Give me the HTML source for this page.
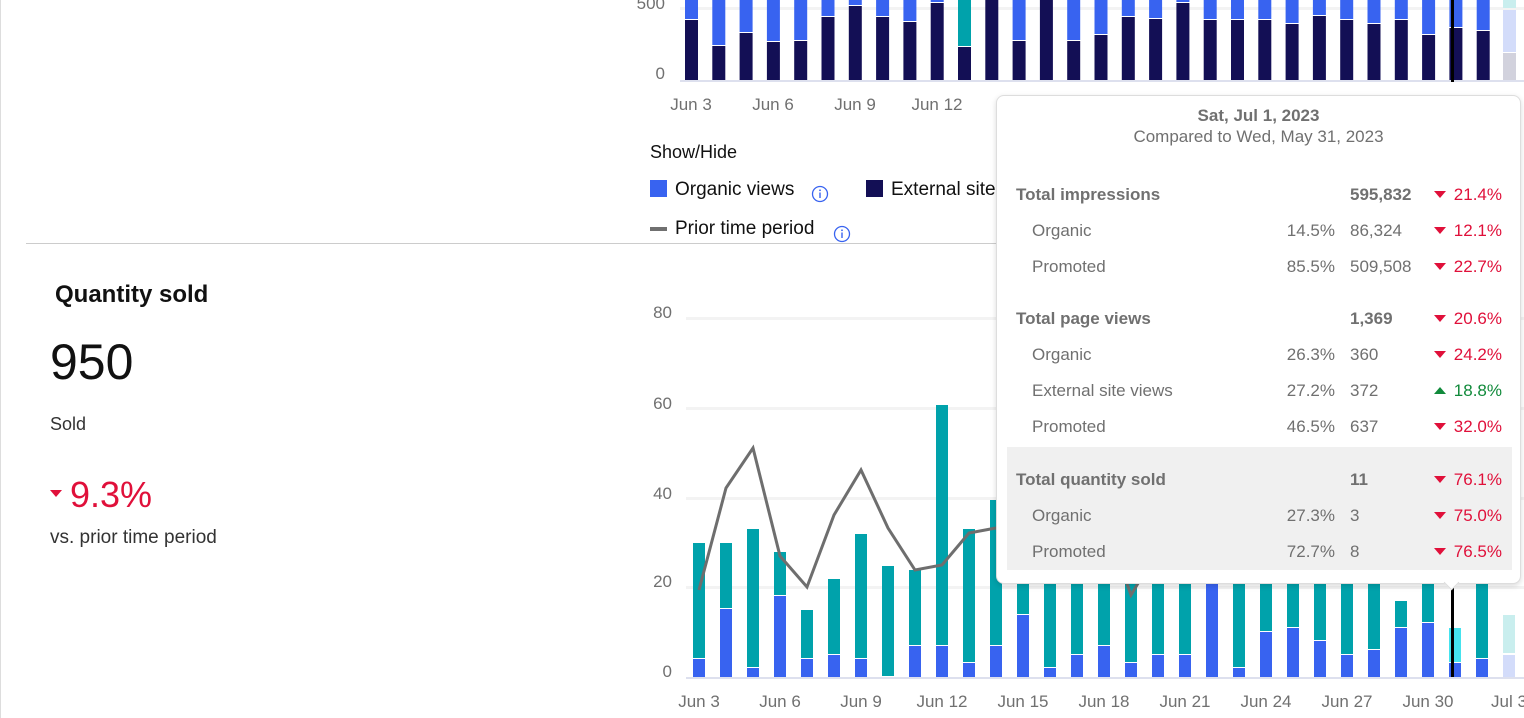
<!DOCTYPE html>
<html><head><meta charset="utf-8"><style>
body{margin:0;width:1524px;height:718px;overflow:hidden;background:#fff;font-family:"Liberation Sans",Arial,sans-serif;position:relative}
.a{position:absolute;white-space:nowrap}
.tt{position:absolute;left:996px;top:95px;width:523px;height:487px;background:#fff;border:1px solid #ddd;border-radius:8px;box-shadow:0 2px 6px rgba(0,0,0,.15);color:#707070;font-size:17px}
.tt .r{position:absolute;left:0;width:523px;height:24px}
.tt .r span{position:absolute}
.red{color:#e0103a}.grn{color:#118a3b}
.dn::before{content:"";display:inline-block;border-left:6px solid transparent;border-right:6px solid transparent;border-top:7px solid #e0103a;margin-right:8px;vertical-align:2px}
.up::before{content:"";display:inline-block;border-left:6px solid transparent;border-right:6px solid transparent;border-bottom:7px solid #118a3b;margin-right:8px;vertical-align:2px}
</style></head><body>
<div class="a" style="left:0;top:0;width:1px;height:718px;background:#ddd"></div>
<div class="a" style="left:26px;top:243px;width:1000px;height:1px;background:#ccc"></div>

<svg class="a" style="left:0;top:0" width="1524" height="718">
<g font-family="Liberation Sans,Arial" font-size="17" fill="#707070">
<text x="665" y="9" text-anchor="end">500</text><text x="665" y="79" text-anchor="end">0</text>
<text x="691" y="110" text-anchor="middle">Jun 3</text><text x="773" y="110" text-anchor="middle">Jun 6</text><text x="855" y="110" text-anchor="middle">Jun 9</text><text x="937" y="110" text-anchor="middle">Jun 12</text>
<text x="672" y="318" text-anchor="end">80</text><text x="672" y="409" text-anchor="end">60</text><text x="672" y="499" text-anchor="end">40</text><text x="672" y="587" text-anchor="end">20</text><text x="672" y="677" text-anchor="end">0</text>
<text x="699" y="707" text-anchor="middle">Jun 3</text><text x="780" y="707" text-anchor="middle">Jun 6</text><text x="861" y="707" text-anchor="middle">Jun 9</text><text x="942" y="707" text-anchor="middle">Jun 12</text><text x="1023" y="707" text-anchor="middle">Jun 15</text><text x="1104" y="707" text-anchor="middle">Jun 18</text><text x="1185" y="707" text-anchor="middle">Jun 21</text><text x="1266" y="707" text-anchor="middle">Jun 24</text><text x="1347" y="707" text-anchor="middle">Jun 27</text><text x="1428" y="707" text-anchor="middle">Jun 30</text><text x="1509" y="707" text-anchor="middle">Jul 3</text>
</g>
<g fill="#f3f3f3"><rect x="680" y="7" width="844" height="3"/><rect x="686" y="317" width="838" height="3"/><rect x="686" y="407" width="838" height="3"/><rect x="686" y="497" width="838" height="3"/><rect x="686" y="586" width="838" height="3"/></g>
<rect x="680" y="80" width="844" height="2" fill="#dde0ee"/>
<rect x="686" y="677" width="838" height="2" fill="#dde0ee"/>
<g id="top"></g>
<g id="bot"></g>
<polyline points="699,590 726,488 753,448 780,556 807,587 834,515 861,470 888,528 915,570 942,565 969,533 996,528 1010,526" fill="none" stroke="#6e6e6e" stroke-width="3"/>
<polyline points="1124,575 1131,595 1140,580" fill="none" stroke="#6e6e6e" stroke-width="3"/>
<rect x="1451" y="0" width="3" height="82" fill="#000"/>
<rect x="1451" y="585" width="3" height="92" fill="#000"/>
</svg>
<script>
var NS="http://www.w3.org/2000/svg";
function r(g,x,y,w,h,c){if(h<=0)return;var e=document.createElementNS(NS,"rect");e.setAttribute("x",x);e.setAttribute("y",y);e.setAttribute("width",w);e.setAttribute("height",h);e.setAttribute("fill",c);g.appendChild(e);}
var tg=document.getElementById("top");
var dk=[20,46,33,42,41,17,6,17,22,3,47,0,41,0,41,35,17,19,3,20,20,20,24,16,20,24,20,35,28,31];
for(var i=0;i<30;i++){var x=685+27.3*i;r(tg,x,0,13,dk[i]-1,i==10?"#00a2ab":"#3863f0");r(tg,x,dk[i],13,80-dk[i],"#130f55");}
r(tg,1503,0,13,8,"#c9eeee");r(tg,1503,10,13,42,"#d3dcfa");r(tg,1503,53,13,27,"#d2d2dd");
var bg=document.getElementById("bot");
var B=[[543,659],[543,609],[529,668],[552,596],[610,659],[579,655],[534,659],[566,677],[570,646],[405,646],[529,663],[500,646],[540,615],[540,668],[550,655],[555,646],[560,663],[550,655],[550,655],[560,580],[550,668],[550,632],[550,628],[550,641],[550,655],[555,650],[601,628],[550,623],[628,663],[560,659]];
for(var i=0;i<30;i++){var x=693+27*i,t=B[i][0],o=B[i][1];r(bg,x,t,12,o-t-1,i==28?"#45e3ee":"#00a2ab");r(bg,x,o,12,677-o,"#3863f0");}
r(bg,1503,615,12,38,"#c9eeee");r(bg,1503,655,12,22,"#d3dcfa");
</script>

<div class="a" style="left:650px;top:142px;font-size:18px;color:#111">Show/Hide</div>
<div class="a" style="left:650px;top:180px;width:17px;height:17px;background:#3863f0"></div>
<div class="a" style="left:675px;top:179px;font-size:19px;color:#111">Organic views</div>
<svg class="a" style="left:811px;top:185px" width="18" height="18"><circle cx="9" cy="9" r="7.5" fill="none" stroke="#3863f0" stroke-width="1.3"/><rect x="8.3" y="7.5" width="1.4" height="5.5" fill="#3863f0"/><circle cx="9" cy="5.3" r="0.9" fill="#3863f0"/></svg>
<div class="a" style="left:866px;top:180px;width:17px;height:17px;background:#130f55"></div>
<div class="a" style="left:891px;top:179px;font-size:19px;color:#111">External site</div>
<div class="a" style="left:650px;top:227px;width:17px;height:4px;background:#707070"></div>
<div class="a" style="left:675px;top:218px;font-size:19px;color:#111">Prior time period</div>
<svg class="a" style="left:833px;top:225px" width="18" height="18"><circle cx="9" cy="9" r="7.5" fill="none" stroke="#3863f0" stroke-width="1.3"/><rect x="8.3" y="7.5" width="1.4" height="5.5" fill="#3863f0"/><circle cx="9" cy="5.3" r="0.9" fill="#3863f0"/></svg>

<div class="a" style="left:55px;top:281px;font-size:24px;font-weight:bold;color:#111">Quantity sold</div>
<div class="a" style="left:50px;top:333px;font-size:50px;color:#111">950</div>
<div class="a" style="left:50px;top:414px;font-size:18px;color:#333">Sold</div>
<div class="a" style="left:50px;top:474px;font-size:36px;color:#e0103a"><span style="display:inline-block;border-left:6px solid transparent;border-right:6px solid transparent;border-top:7px solid #e0103a;vertical-align:10px;margin-right:8px"></span>9.3%</div>
<div class="a" style="left:50px;top:527px;font-size:19px;color:#333">vs. prior time period</div>

<div class="tt">
<div class="a" style="left:0;width:523px;top:10px;text-align:center;font-weight:bold;font-size:17px">Sat, Jul 1, 2023</div>
<div class="a" style="left:0;width:523px;top:31px;text-align:center;font-size:17px">Compared to Wed, May 31, 2023</div>
<div class="a" style="left:10px;top:351px;width:505px;height:123px;background:#f0f0f0"></div>
<div class="r" style="top:89px;font-weight:bold"><span style="left:19px">Total impressions</span><span style="left:353px">595,832</span></div><div class="r" style="top:89px"><span class="red dn" style="right:18px">21.4%</span></div>
<div class="r" style="top:125px"><span style="left:35px">Organic</span><span style="right:185px">14.5%</span><span style="left:353px">86,324</span><span class="red dn" style="right:18px">12.1%</span></div>
<div class="r" style="top:161px"><span style="left:35px">Promoted</span><span style="right:185px">85.5%</span><span style="left:353px">509,508</span><span class="red dn" style="right:18px">22.7%</span></div>
<div class="r" style="top:213px;font-weight:bold"><span style="left:19px">Total page views</span><span style="left:353px">1,369</span></div><div class="r" style="top:213px"><span class="red dn" style="right:18px">20.6%</span></div>
<div class="r" style="top:249px"><span style="left:35px">Organic</span><span style="right:185px">26.3%</span><span style="left:353px">360</span><span class="red dn" style="right:18px">24.2%</span></div>
<div class="r" style="top:285px"><span style="left:35px">External site views</span><span style="right:185px">27.2%</span><span style="left:353px">372</span><span class="grn up" style="right:18px">18.8%</span></div>
<div class="r" style="top:321px"><span style="left:35px">Promoted</span><span style="right:185px">46.5%</span><span style="left:353px">637</span><span class="red dn" style="right:18px">32.0%</span></div>
<div class="r" style="top:374px;font-weight:bold"><span style="left:19px">Total quantity sold</span><span style="left:353px">11</span></div><div class="r" style="top:374px"><span class="red dn" style="right:18px">76.1%</span></div>
<div class="r" style="top:410px"><span style="left:35px">Organic</span><span style="right:185px">27.3%</span><span style="left:353px">3</span><span class="red dn" style="right:18px">75.0%</span></div>
<div class="r" style="top:446px"><span style="left:35px">Promoted</span><span style="right:185px">72.7%</span><span style="left:353px">8</span><span class="red dn" style="right:18px">76.5%</span></div>
</div>
<div class="a" style="left:1446px;top:577px;width:10px;height:10px;background:#fff;transform:rotate(45deg);border-right:1px solid #ddd;border-bottom:1px solid #ddd"></div>
</body></html>
